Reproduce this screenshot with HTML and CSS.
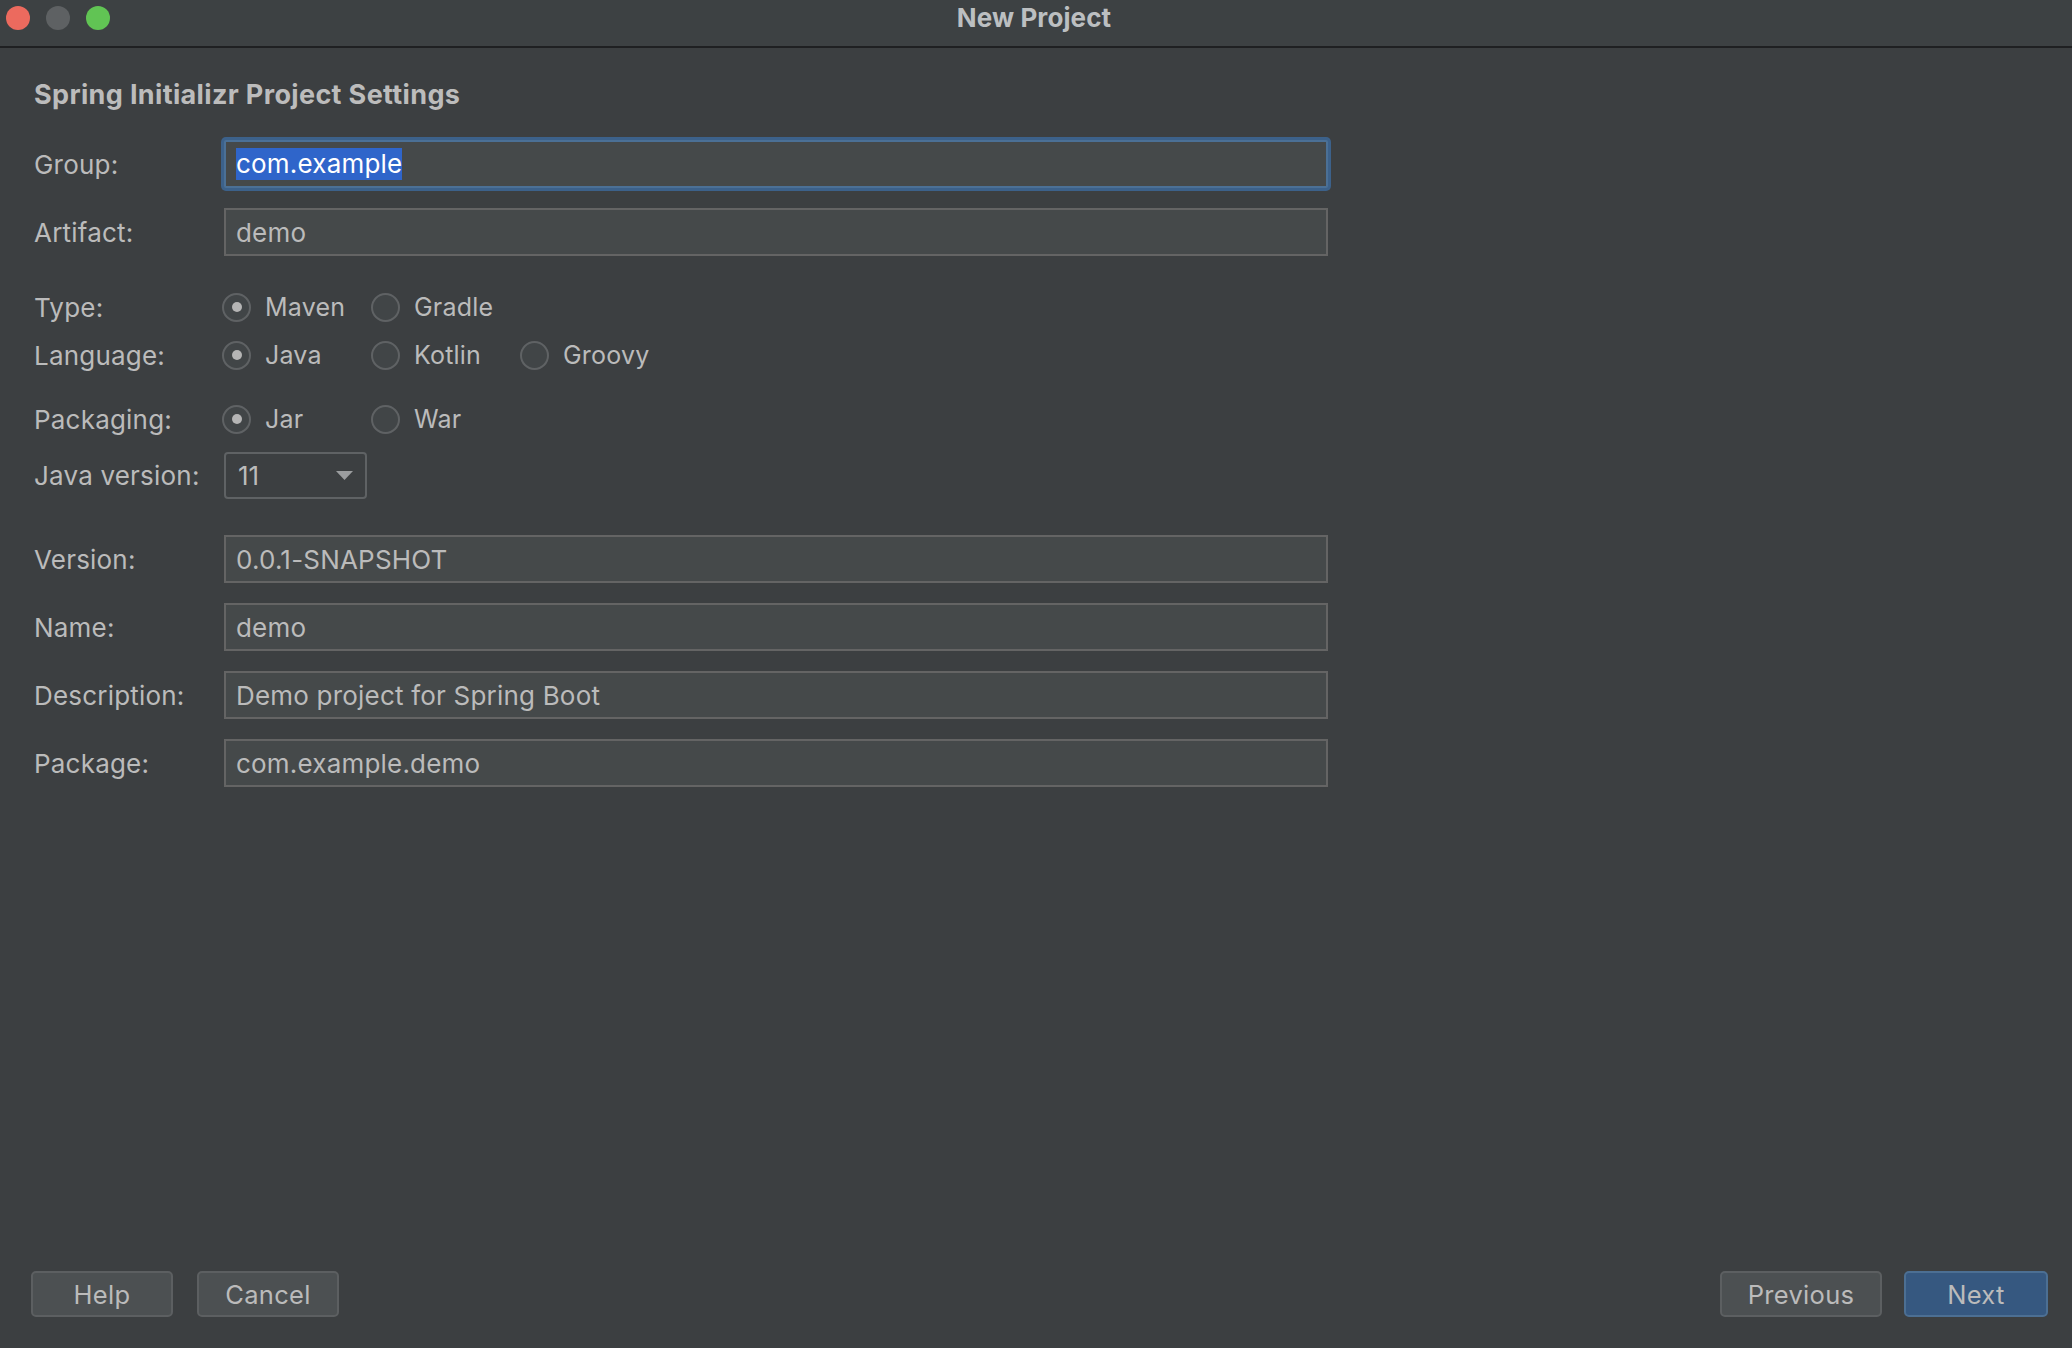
FILE: index.html
```html
<!DOCTYPE html>
<html>
<head>
<meta charset="utf-8">
<title>New Project</title>
<link rel="stylesheet" href="styles.css">
</head>
<body>
<div class="window">
  <div class="titlebar">
    <div class="lights">
      <span class="light red"></span>
      <span class="light gray"></span>
      <span class="light green"></span>
    </div>
    <div class="title">New Project</div>
  </div>

  <div class="content">
    <h1 class="heading">Spring Initializr Project Settings</h1>

    <div class="row row-field first">
      <label class="label">Group:</label>
      <div class="input focused"><span class="selected">com.example</span></div>
    </div>
    <div class="row row-field">
      <label class="label">Artifact:</label>
      <div class="input">demo</div>
    </div>

    <div class="row row-radio gap-type">
      <label class="label">Type:</label>
      <div class="radios">
        <div class="option"><span class="radio checked"></span><span>Maven</span></div>
        <div class="option"><span class="radio"></span><span>Gradle</span></div>
      </div>
    </div>
    <div class="row row-radio gap-lang">
      <label class="label">Language:</label>
      <div class="radios">
        <div class="option"><span class="radio checked"></span><span>Java</span></div>
        <div class="option"><span class="radio"></span><span>Kotlin</span></div>
        <div class="option"><span class="radio"></span><span>Groovy</span></div>
      </div>
    </div>
    <div class="row row-radio gap-pack">
      <label class="label">Packaging:</label>
      <div class="radios">
        <div class="option"><span class="radio checked"></span><span>Jar</span></div>
        <div class="option"><span class="radio"></span><span>War</span></div>
      </div>
    </div>
    <div class="row row-select gap-java">
      <label class="label">Java version:</label>
      <div class="select">
        <span>11</span>
        <svg class="arrow" width="17" height="9" viewBox="0 0 17 9"><path d="M0 0 H17 L8.5 9 Z" fill="#9b9d9f"/></svg>
      </div>
    </div>

    <div class="row row-field gap-version">
      <label class="label">Version:</label>
      <div class="input">0.0.1-SNAPSHOT</div>
    </div>
    <div class="row row-field">
      <label class="label">Name:</label>
      <div class="input">demo</div>
    </div>
    <div class="row row-field">
      <label class="label">Description:</label>
      <div class="input">Demo project for Spring Boot</div>
    </div>
    <div class="row row-field">
      <label class="label">Package:</label>
      <div class="input">com.example.demo</div>
    </div>
  </div>

  <div class="footer">
    <div class="btn-group">
      <button class="btn btn-help">Help</button>
      <button class="btn btn-cancel">Cancel</button>
    </div>
    <div class="btn-group right">
      <button class="btn btn-prev">Previous</button>
      <button class="btn btn-next primary">Next</button>
    </div>
  </div>
</div>
</body>
</html>
```

FILE: styles.css
```css
* { box-sizing: border-box; }

html, body {
  margin: 0;
  padding: 0;
  background: #3c3f41;
}

body {
  font-family: Inter, "Noto Sans", "Liberation Sans", sans-serif;
  font-size: 26px;
  color: #bbbbbb;
}

.window {
  width: 2072px;
  height: 1348px;
  display: flex;
  flex-direction: column;
  background: #3c3f41;
}

.titlebar {
  height: 48px;
  flex: none;
  background: #3d4143;
  border-bottom: 2px solid #1f2022;
  position: relative;
  display: flex;
  align-items: center;
  justify-content: center;
}

.lights {
  position: absolute;
  left: 6px;
  top: 6px;
  display: flex;
  gap: 16px;
}

.light {
  width: 24px;
  height: 24px;
  border-radius: 50%;
  display: block;
}
.light.red { background: #ec6a5e; }
.light.gray { background: #5e6163; }
.light.green { background: #61c454; }

.title {
  font-weight: 700;
  font-size: 26px;
  color: #bcbfc1;
  margin-top: -12px;
  margin-left: -4px;
  letter-spacing: 0.1px;
}

.content {
  flex: 1;
  padding: 31px 0 0 34px;
  display: flex;
  flex-direction: column;
}

.heading {
  margin: 0;
  font-size: 27px;
  line-height: 32px;
  font-weight: 700;
  color: #bcbcbc;
  letter-spacing: 0.35px;
}

.row {
  display: flex;
  align-items: center;
}

.label {
  width: 190px;
  flex: none;
  color: #bbbbbb;
  letter-spacing: 0.2px;
}

.row-field { height: 48px; margin-top: 20px; }
.row-field.first { margin-top: 29px; }

.input {
  width: 1104px;
  height: 48px;
  border: 2px solid #646464;
  background: #45494a;
  padding-left: 10px;
  display: flex;
  align-items: center;
  color: #bbbbbb;
  letter-spacing: 0.2px;
}

.input.focused {
  border-color: #4b7096;
  box-shadow: 0 0 0 3px #3c618a;
  border-radius: 2px;
}

.selected {
  background: #2f65ca;
  color: #ffffff;
  height: 32px;
  line-height: 32px;
  display: inline-block;
}

.row-radio { height: 36px; }
.gap-type { margin-top: 33px; }
.gap-lang { margin-top: 12px; }
.gap-pack { margin-top: 28px; }

.radios {
  display: flex;
  margin-left: -2px;
}

.option {
  width: 149px;
  display: flex;
  align-items: center;
  gap: 14px;
  font-size: 25px;
  letter-spacing: 0.2px;
}

.radio {
  width: 29px;
  height: 29px;
  border-radius: 50%;
  border: 2px solid #5f6264;
  background: #414547;
  display: flex;
  align-items: center;
  justify-content: center;
  flex: none;
}

.radio.checked::after {
  content: "";
  width: 10px;
  height: 10px;
  border-radius: 50%;
  background: #b5b5b5;
}

.row-select { height: 47px; margin-top: 15px; }

.select {
  width: 143px;
  height: 47px;
  border: 2px solid #5f6264;
  border-radius: 4px;
  display: flex;
  align-items: center;
  justify-content: space-between;
  padding: 0 12px 0 12px;
}

.gap-version { margin-top: 36px; }

.footer {
  flex: none;
  display: flex;
  justify-content: space-between;
  padding: 0 24px 31px 31px;
}

.btn-group {
  display: flex;
  gap: 24px;
}
.btn-group.right { gap: 22px; }

.btn {
  height: 46px;
  border: 2px solid #5c5f61;
  background: #4c5052;
  border-radius: 5px;
  color: #bbbbbb;
  font-family: Inter, "Noto Sans", "Liberation Sans", sans-serif;
  font-size: 25.5px;
  letter-spacing: 0.3px;
  padding: 0;
}

.btn-help { width: 142px; }
.btn-cancel { width: 142px; }
.btn-prev { width: 162px; }
.btn-next { width: 144px; }

.btn.primary {
  background: #365880;
  border-color: #4c6f93;
}
```
